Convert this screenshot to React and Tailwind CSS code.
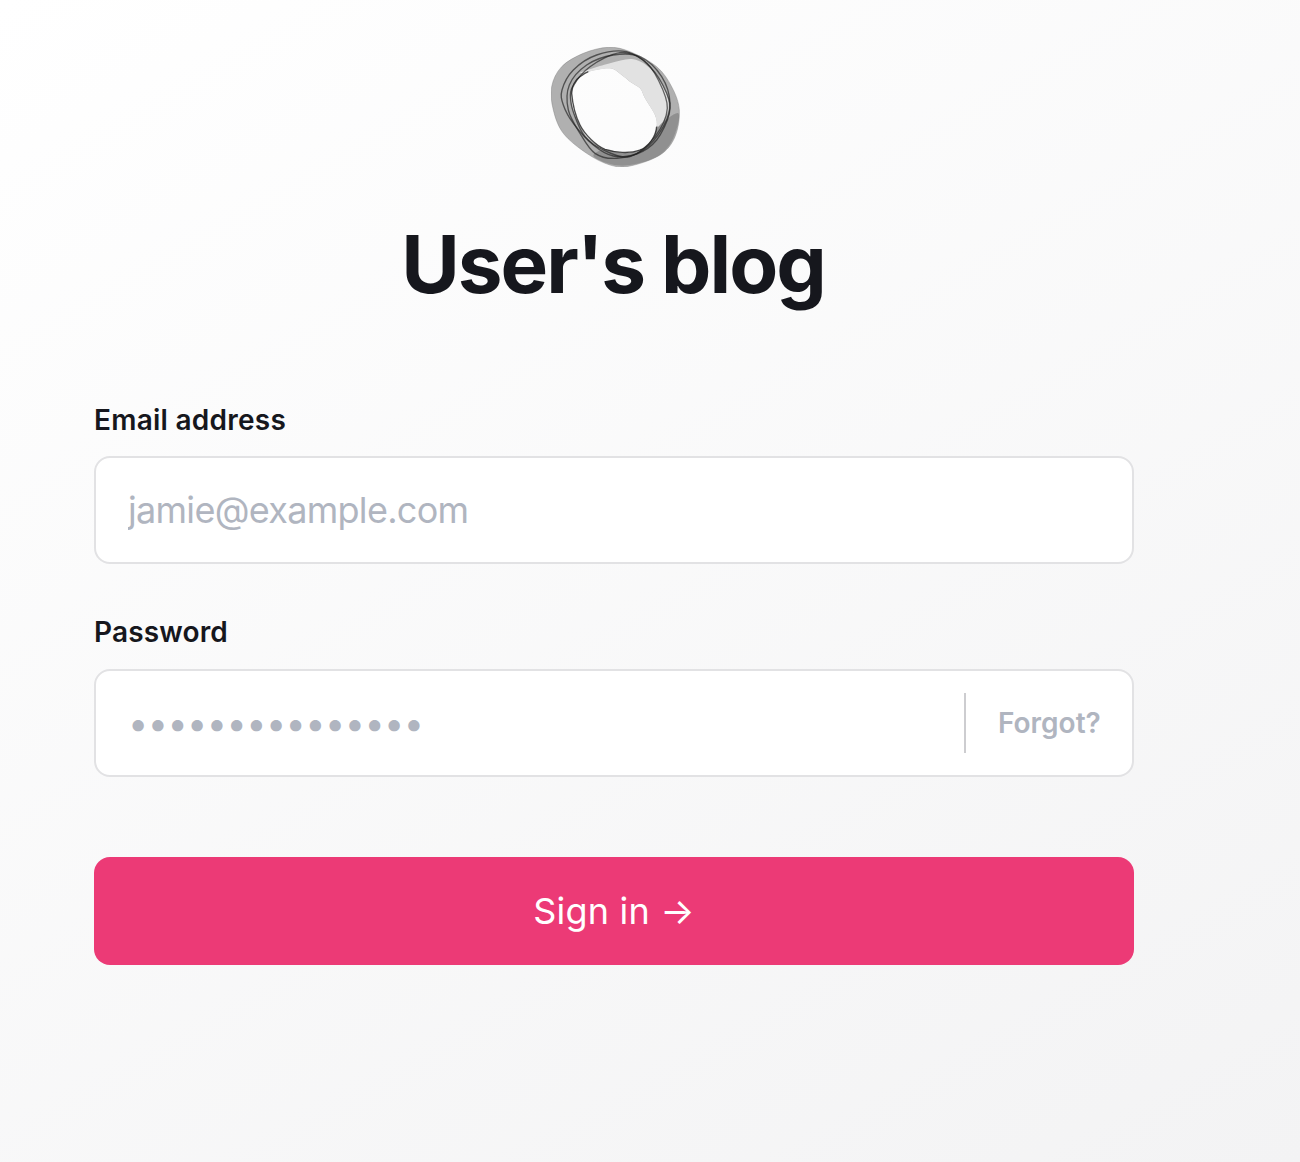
// Closed smooth path through a list of points
function smooth(points) {
  const n = points.length;
  let d = `M${points[0][0]} ${points[0][1]}`;
  for (let i = 0; i < n; i++) {
    const p0 = points[(i - 1 + n) % n];
    const p1 = points[i];
    const p2 = points[(i + 1) % n];
    const p3 = points[(i + 2) % n];
    const c1x = p1[0] + (p2[0] - p0[0]) / 6;
    const c1y = p1[1] + (p2[1] - p0[1]) / 6;
    const c2x = p2[0] - (p3[0] - p1[0]) / 6;
    const c2y = p2[1] - (p3[1] - p1[1]) / 6;
    d += `C${c1x} ${c1y} ${c2x} ${c2y} ${p2[0]} ${p2[1]}`;
  }
  return d + 'Z';
}

const outer = [[235, 52], [300, 65], [380, 110], [425, 170], [448, 240], [435, 320], [390, 375], [300, 408], [240, 405], [170, 370], [100, 310], [70, 240], [65, 170], [95, 110], [160, 70]];
const hole = [[150, 140], [175, 125], [240, 115], [275, 135], [300, 155], [330, 175], [345, 205], [375, 255], [380, 290], [365, 335], [330, 360], [280, 368], [225, 358], [175, 325], [150, 285], [130, 240], [125, 190]];
const light = [[150, 128], [240, 100], [310, 88], [365, 120], [405, 180], [415, 240], [385, 290], [375, 255], [345, 205], [330, 175], [300, 155], [275, 135], [240, 115], [175, 125]];
const shade = [[385, 290], [445, 250], [430, 325], [385, 378], [300, 405], [240, 402], [190, 378], [225, 358], [280, 368], [330, 360], [365, 335]];
const holeEdge = 'M380 290C378 320 355 352 330 360C300 372 255 368 225 358C200 348 165 315 150 285C140 265 128 225 125 190C125 170 135 150 150 140C160 132 170 127 175 125';

const lines = [
  [[96, 180], [130, 120], [200, 75], [290, 65], [360, 110], [410, 190], [418, 250], [380, 330], [320, 372], [250, 378], [190, 345], [130, 280], [100, 225]],
  [[118, 165], [170, 105], [250, 75], [330, 80], [395, 140], [420, 220], [400, 290], [340, 360], [260, 385], [195, 370], [150, 310], [115, 240]],
  [[128, 170], [180, 110], [270, 68], [340, 90], [385, 150], [412, 235], [375, 320], [300, 380], [220, 360], [165, 320], [135, 260], [122, 210]],
];

function Logo() {
  return (
    <svg width="130" height="120" viewBox="63 51 390 360" className="ml-[3px] block" fill="none">
      <defs>
        <filter id="soft">
          <feGaussianBlur stdDeviation="1.4" />
        </filter>
      </defs>
      <g filter="url(#soft)">
        <path fillRule="evenodd" fill="#b0b0b0" d={`${smooth(outer)}${smooth(hole)}`} />
        <path fill="#e2e2e2" d={smooth(light)} />
        <path fill="#6a6a6a" fillOpacity="0.45" d={smooth(shade)} />
        {lines.map((line, i) => (
          <path key={i} d={smooth(line)} stroke="#1f1f1f" strokeOpacity="0.65" strokeWidth="4" />
        ))}
        <path d={holeEdge} stroke="#222222" strokeOpacity="0.8" strokeWidth="4" />
        <path d={smooth(outer)} stroke="#777777" strokeOpacity="0.6" strokeWidth="2" />
      </g>
    </svg>
  );
}

export default function App() {
  return (
    <div className="min-h-[1162px] w-full bg-[linear-gradient(150deg,#ffffff,#f3f3f4)] font-['Inter',sans-serif] text-[#16171d]">
      <div className="ml-[94px] w-[1040px]">
        <div className="flex flex-col items-center pt-[47px]">
          <Logo />
          <h1 className="mt-[57px] pr-[2px] text-[80px] font-bold leading-[80px] tracking-[-2px]">User's blog</h1>
        </div>

        <form className="mt-[96px]">
          <label className="block text-[28px] font-semibold leading-[40px] tracking-[0.25px]">Email address</label>
          <input
            type="email"
            placeholder="jamie@example.com"
            className="mt-[16px] block h-[108px] w-full rounded-[16px] border-2 border-[#e2e2e4] bg-white px-[32px] text-[36px] tracking-[-0.7px] outline-none placeholder:text-[#b0b5c0]"
          />

          <label className="mt-[48px] block text-[28px] font-semibold leading-[40px] tracking-[0.15px]">Password</label>
          <div className="mt-[17px] flex h-[108px] w-full items-center rounded-[16px] border-2 border-[#e2e2e4] bg-white">
            <input
              type="password"
              placeholder="•••••••••••••••"
              className="h-full min-w-0 flex-1 rounded-[16px] bg-transparent pl-[32px] text-[36px] tracking-[-0.55px] outline-none placeholder:text-[#b0b5c0]"
            />
            <div className="flex h-[60px] w-[168px] items-center border-l-2 border-[#cdcdd0] pl-[32px] text-[28px] font-semibold text-[#b0b5c0]">
              Forgot?
            </div>
          </div>

          <button
            type="button"
            className="mt-[80px] flex h-[108px] w-full items-center justify-center rounded-[16px] bg-[#ec3a76] text-[36px] tracking-[0.2px] text-white"
          >
            Sign in →
          </button>
        </form>
      </div>
    </div>
  );
}
